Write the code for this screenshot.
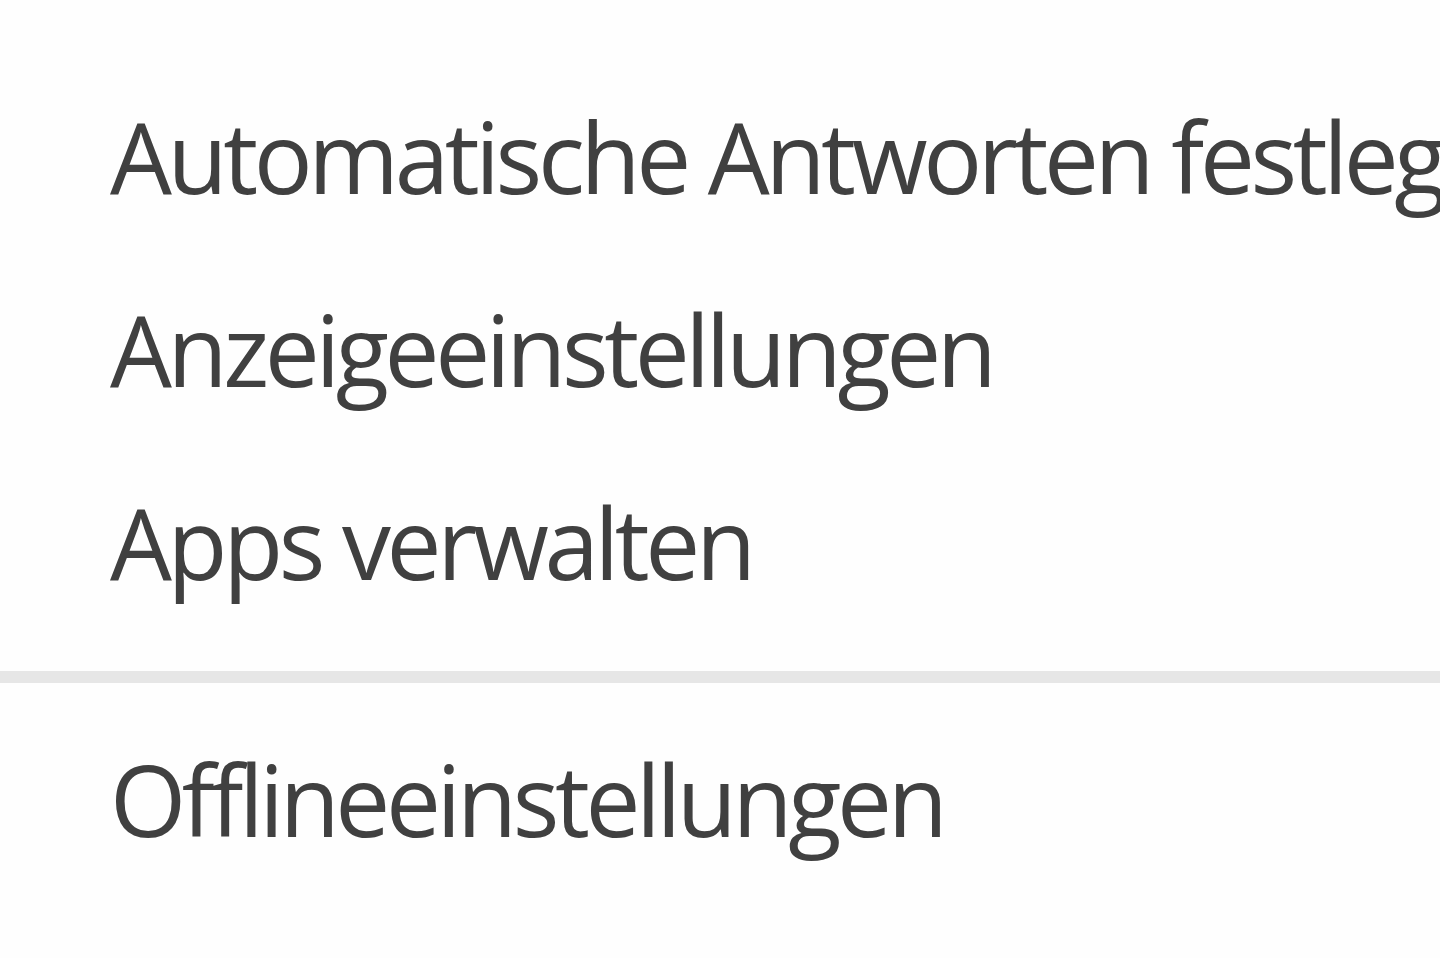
import React from 'react';

const items = ['Automatische Antworten festlegen', 'Anzeigeeinstellungen', 'Apps verwalten'];

export default function App() {
    return (
        <div className="w-[1440px] h-[958px] overflow-hidden bg-[#fefefe] text-[#404040]" style={{ fontFamily: '"Open Sans", "Noto Sans", sans-serif' }}>
            <div className="pt-[60px]">
                {items.map((label) => (
                    <div key={label} className="h-[193px] pl-[110px] text-[98px] leading-[193px] tracking-[-4.4px] whitespace-nowrap">
                        {label}
                    </div>
                ))}
                <div className="mt-[32px] h-[12px] bg-[#e6e6e6]" />
                <div className="mt-[20px] h-[193px] pl-[110px] text-[98px] leading-[193px] tracking-[-4.4px] whitespace-nowrap">
                    Offlineeinstellungen
                </div>
            </div>
        </div>
    );
}
